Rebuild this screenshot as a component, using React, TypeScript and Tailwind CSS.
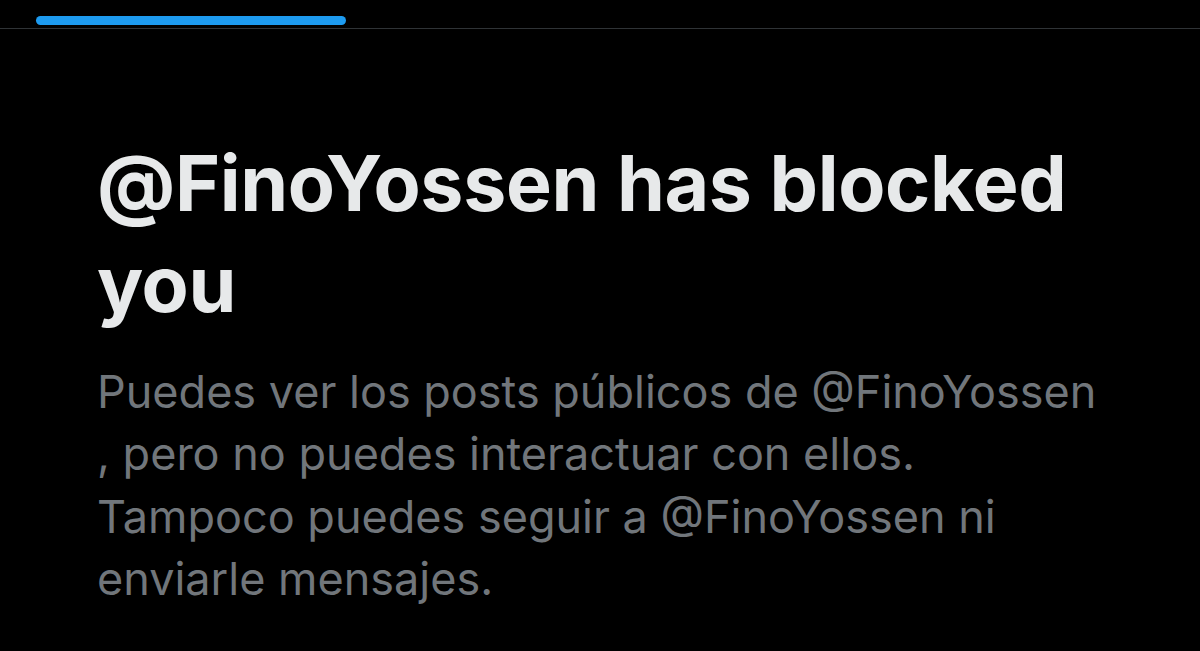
export default function App() {
  return (
    <div className="w-[1200px] h-[651px] overflow-hidden bg-black" style={{ fontFamily: 'Inter, "Noto Sans", sans-serif' }}>
      {/* Tab strip */}
      <div className="h-[29px] border-b border-[#2f3336] flex items-end">
        <div className="ml-[36px] mb-[3px] w-[310px] h-[9px] rounded-full bg-[#1d9bf0]" />
      </div>

      <div className="px-[97px] pt-[104px]">
        <h1 className="text-[77px] leading-[101px] tracking-[-0.35px] font-bold text-[#e7e9ea] whitespace-nowrap">
          @FinoYossen has blocked
          <br />
          you
        </h1>
        <div className="mt-[26px] text-[45px] leading-[62.4px] text-[#71767b] whitespace-nowrap">
          <div>Puedes ver los posts públicos de @FinoYossen</div>
          <div>, pero no puedes interactuar con ellos.</div>
          <div>Tampoco puedes seguir a @FinoYossen ni</div>
          <div>enviarle mensajes.</div>
        </div>
      </div>
    </div>
  );
}
